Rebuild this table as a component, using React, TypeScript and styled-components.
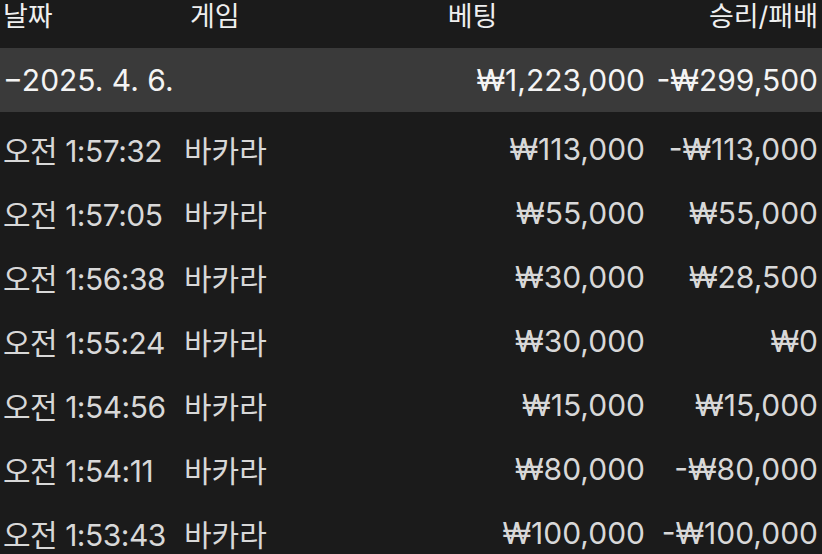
import React from "react";
import styled, { createGlobalStyle } from "styled-components";

const Global = createGlobalStyle`
  html, body { margin: 0; padding: 0; background: #1b1b1b; }
  body { font-family: "Inter", "Noto Sans CJK KR", sans-serif; }
`;

const Page = styled.div`
  width: 822px;
  height: 554px;
  overflow: hidden;
  background: #1b1b1b;
  color: #d8d8d8;
  font-size: 30px;
`;

const Grid = styled.div`
  display: grid;
  grid-template-columns: 181px 116px 345px 173px;
  padding: 0 4px 0 3px;
  align-items: center;
`;

const HeaderRow = styled(Grid)`
  height: 48px;
  align-items: start;
  line-height: 34px;
  color: #efefef;
  font-size: 27px;
`;

const DateRow = styled(Grid)`
  height: 64px;
  background: #3a3a3a;
  color: #f4f4f4;
`;

const DataRow = styled(Grid)`
  height: 64px;
  &:first-of-type { margin-top: 5px; }
`;

const Cell = styled.div<{ $align?: "left" | "right" | "center"; $pad?: number; $tight?: boolean }>`
  text-align: ${(p) => p.$align || "left"};
  padding-left: ${(p) => p.$pad || 0}px;
  letter-spacing: ${(p) => (p.$tight ? "-0.5px" : "normal")};
  white-space: nowrap;
`;

const Rows = styled.div``;

const rows = [
  ["오전 1:57:32", "₩113,000", "-₩113,000"],
  ["오전 1:57:05", "₩55,000", "₩55,000"],
  ["오전 1:56:38", "₩30,000", "₩28,500"],
  ["오전 1:55:24", "₩30,000", "₩0"],
  ["오전 1:54:56", "₩15,000", "₩15,000"],
  ["오전 1:54:11", "₩80,000", "-₩80,000"],
  ["오전 1:53:43", "₩100,000", "-₩100,000"],
];

export default function App() {
  return (
    <Page>
      <Global />
      <HeaderRow>
        <Cell>날짜</Cell>
        <Cell $pad={6}>게임</Cell>
        <Cell $align="center">베팅</Cell>
        <Cell $align="right">승리/패배</Cell>
      </HeaderRow>
      <DateRow>
        <Cell>−2025. 4. 6.</Cell>
        <Cell />
        <Cell $align="right">₩1,223,000</Cell>
        <Cell $align="right">-₩299,500</Cell>
      </DateRow>
      <Rows>
        {rows.map((r) => (
          <DataRow key={r[0]}>
            <Cell $tight>{r[0]}</Cell>
            <Cell>바카라</Cell>
            <Cell $align="right">{r[1]}</Cell>
            <Cell $align="right">{r[2]}</Cell>
          </DataRow>
        ))}
      </Rows>
    </Page>
  );
}
